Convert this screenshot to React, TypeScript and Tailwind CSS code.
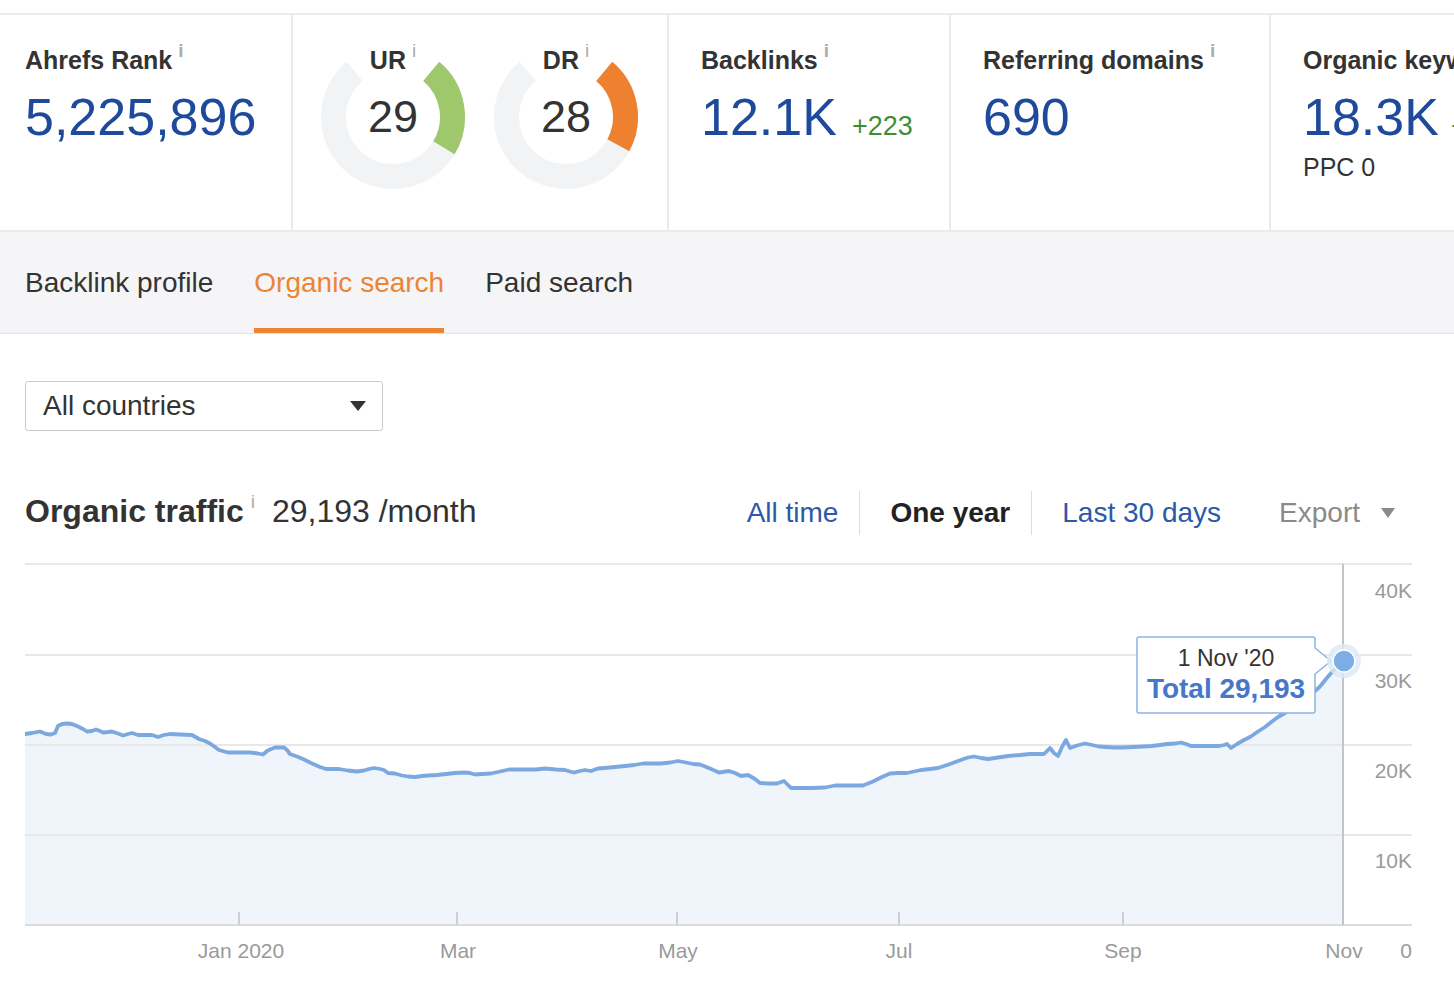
import React from 'react';

const pts: [number, number][] = [
  [25, 734], [32, 733], [40, 731.5], [46, 734], [51, 734.5], [55, 733], [58, 726], [62, 724], [67, 723.5], [72, 724],
  [78, 726.5], [83, 729], [87, 731.5], [92, 731], [96, 729.5], [100, 731], [103, 732.5], [108, 732], [112, 731.5],
  [118, 733.5], [123, 735.5], [128, 734], [132, 733], [138, 735], [145, 735], [152, 735], [158, 737], [164, 735],
  [170, 734], [180, 734.5], [192, 735], [199, 739], [205, 741], [210, 743.5], [215, 747], [219, 750], [228, 752.5],
  [240, 752.5], [250, 752.5], [258, 753.5], [263, 754.5], [267, 751], [270, 749.5], [275, 747.5], [279, 747.5],
  [284, 747.5], [287, 750], [290, 754], [297, 756.5], [304, 759.5], [312, 763.5], [320, 767], [326, 769], [333, 769],
  [339, 769], [348, 770.5], [357, 771.5], [364, 770.5], [369, 769], [374, 768], [380, 769], [384, 770], [388, 773],
  [395, 773.5], [402, 775.5], [408, 776.5], [415, 777], [422, 776], [428, 775.5], [437, 775], [446, 774], [455, 773],
  [464, 772.5], [470, 773], [475, 774.5], [482, 774], [491, 773.5], [500, 771.5], [509, 769.5], [520, 769.5],
  [536, 769.5], [545, 768.5], [556, 769.5], [565, 770], [570, 771.5], [574, 772.5], [580, 771], [585, 770], [591, 771],
  [598, 768.5], [610, 767.5], [625, 766], [634, 765], [643, 763.5], [652, 763.5], [661, 763.5], [670, 762.5],
  [678, 761], [686, 762.5], [693, 764], [700, 764.5], [710, 768.5], [719, 772.5], [729, 771], [735, 773], [741, 776],
  [748, 775], [755, 779], [760, 783], [768, 783.5], [777, 783.5], [784, 781], [788, 785], [791, 788], [800, 788],
  [812, 788], [825, 787.5], [835, 785.5], [850, 785.5], [863, 785.5], [873, 781.5], [882, 777], [890, 773.5],
  [898, 773], [907, 773], [914, 771.5], [921, 770], [930, 769], [938, 768], [950, 764], [962, 759.5], [968, 757.5],
  [974, 756.5], [981, 758], [988, 759], [998, 757.5], [1008, 756], [1020, 755], [1030, 754], [1037, 754], [1044, 754],
  [1047, 751], [1050, 748], [1054, 753], [1058, 756], [1062, 747], [1066, 740], [1070, 748], [1077, 745.5],
  [1085, 743.5], [1092, 745], [1099, 746.5], [1106, 747], [1114, 747.5], [1123, 747.5], [1133, 747], [1143, 746.5],
  [1152, 746], [1160, 745], [1167, 744], [1175, 743.5], [1181, 742.5], [1186, 744], [1191, 746], [1200, 746],
  [1210, 746], [1219, 746], [1224, 745], [1227, 744], [1231, 748], [1237, 744], [1244, 740], [1250, 737],
  [1258, 731.5], [1265, 727], [1272, 721.5], [1278, 717], [1285, 713], [1292, 708], [1301, 702], [1308, 697],
  [1314, 692], [1320, 686.5], [1326, 679], [1332, 672], [1338, 666], [1343, 661],
];

const linePath = 'M' + pts.map((p) => p.join(',')).join(' L');
const areaPath = linePath + ' L1343,925 L25,925 Z';

function polar(cx: number, cy: number, r: number, a: number) {
  const rad = (a * Math.PI) / 180;
  return [cx + r * Math.sin(rad), cy - r * Math.cos(rad)];
}

function arc(cx: number, cy: number, r: number, a1: number, a2: number) {
  const [x1, y1] = polar(cx, cy, r, a1);
  const [x2, y2] = polar(cx, cy, r, a2);
  const large = a2 - a1 > 180 ? 1 : 0;
  return `M${x1},${y1} A${r},${r} 0 ${large} 1 ${x2},${y2}`;
}

function Info() {
  return <span className="relative -top-[4px] ml-[6px] text-[19px] leading-[19px] text-[#ababab]">i</span>;
}

function Gauge({ label, value, color }: { label: string; value: number; color: string }) {
  const end = 40 + (280 * value) / 100;
  return (
    <div className="relative w-[150px] h-[150px]">
      <svg width="150" height="150" viewBox="0 0 150 150" className="absolute left-0 top-0">
        <path d={arc(75, 75, 59.5, 40, 320)} fill="none" stroke="#f1f3f5" strokeWidth="25" />
        <path d={arc(75, 75, 59.5, 40, end)} fill="none" stroke={color} strokeWidth="25" />
      </svg>
      <div className="absolute left-0 right-0 top-[3px] flex justify-center items-start">
        <span className="text-[25px] leading-[30px] font-bold text-[#333]">{label}</span>
        <Info />
      </div>
      <div className="absolute inset-0 flex items-center justify-center text-[45px] text-[#333]">{value}</div>
    </div>
  );
}

export default function App() {
  return (
    <div className="w-[1454px] h-[998px] overflow-hidden bg-white font-['Liberation_Sans',Arial,sans-serif] text-[#333]">
      <div className="h-[13px]" />
      {/* stats */}
      <div className="flex h-[219px] border-y-2 border-[#ebebeb]">
        <div className="w-[293px] shrink-0 border-r-2 border-[#ebebeb] pl-[25px] pt-[30px]">
          <div className="flex items-start text-[25px] leading-[30px] font-bold">
            Ahrefs Rank
            <Info />
          </div>
          <div className="mt-[12px] text-[52px] leading-[60px] text-[#1f4a9b]">5,225,896</div>
        </div>
        <div className="w-[376px] shrink-0 border-r-2 border-[#ebebeb] pl-[25px] pt-[27px] flex gap-[23px] items-start">
          <Gauge label="UR" value={29} color="#9fc86c" />
          <Gauge label="DR" value={28} color="#ee8130" />
        </div>
        <div className="w-[282px] shrink-0 border-r-2 border-[#ebebeb] pl-[32px] pt-[30px]">
          <div className="flex items-start text-[25px] leading-[30px] font-bold">
            Backlinks
            <Info />
          </div>
          <div className="mt-[12px] h-[60px] text-[52px] leading-[60px] text-[#1f4a9b] whitespace-nowrap">
            12.1K<span className="ml-[15px] text-[27px] leading-none text-[#3f8f32]">+223</span>
          </div>
        </div>
        <div className="w-[320px] shrink-0 border-r-2 border-[#ebebeb] pl-[32px] pt-[30px]">
          <div className="flex items-start text-[25px] leading-[30px] font-bold">
            Referring domains
            <Info />
          </div>
          <div className="mt-[12px] text-[52px] leading-[60px] text-[#1f4a9b]">690</div>
        </div>
        <div className="flex-1 min-w-0 overflow-hidden pl-[32px] pt-[30px] whitespace-nowrap">
          <div className="flex items-start text-[25px] leading-[30px] font-bold">
            Organic keywords
            <Info />
          </div>
          <div className="mt-[12px] h-[60px] text-[52px] leading-[60px] text-[#1f4a9b]">
            18.3K<span className="ml-[12px] text-[27px] leading-none text-[#3f8f32]">+1.1K</span>
          </div>
          <div className="mt-[5px] text-[25px] leading-[30px]">PPC 0</div>
        </div>
      </div>
      {/* tabs */}
      <div className="flex h-[102px] gap-[41px] border-b border-[#e2e2e2] bg-[#f5f5f7] pl-[25px] text-[28px]">
        <div className="flex items-center border-y-[5px] border-transparent">Backlink profile</div>
        <div className="flex items-center border-y-[5px] border-t-transparent border-b-[#ec8433] text-[#ec8433]">Organic search</div>
        <div className="flex items-center border-y-[5px] border-transparent">Paid search</div>
      </div>
      {/* country select */}
      <div className="pl-[25px] pt-[47px]">
        <div className="flex h-[50px] w-[358px] items-center justify-between rounded-[3px] border border-[#cccccc] pl-[17px] pr-[16px] text-[28px]">
          <span>All countries</span>
          <svg width="16" height="10" viewBox="0 0 16 10">
            <polygon points="0,0 16,0 8,10" fill="#333" />
          </svg>
        </div>
      </div>
      {/* header */}
      <div className="mt-[60px] flex h-[40px] items-center justify-between pl-[25px] pr-[59px]">
        <div className="flex items-start text-[32px] leading-[40px]">
          <span className="font-bold">Organic traffic</span>
          <span className="relative top-[1px] ml-[7px] text-[19px] leading-[19px] text-[#ababab]">i</span>
          <span className="ml-[17px]">29,193 /month</span>
        </div>
        <div className="flex items-center text-[28px] leading-[40px] pt-[4px]">
          <span className="text-[#2c59a9]">All time</span>
          <span className="mx-[21px] h-[44px] w-px bg-[#dddddd]" />
          <span className="ml-[9px] font-bold text-[#222]">One year</span>
          <span className="mx-[21px] h-[44px] w-px bg-[#dddddd]" />
          <span className="ml-[9px] text-[#2c59a9]">Last 30 days</span>
          <span className="ml-[58px] text-[#8a8a8a]">Export</span>
          <svg width="14" height="10" viewBox="0 0 14 10" className="ml-[21px]">
            <polygon points="0,0 14,0 7,10" fill="#8a8a8a" />
          </svg>
        </div>
      </div>
      {/* chart */}
      <svg
        width="1390"
        height="430"
        viewBox="25 560 1390 430"
        className="ml-[25px] mt-[29px] block"
        fontFamily="'Liberation Sans', Arial, sans-serif"
      >
        <path d={areaPath} fill="#f0f5fc" />
        {[564, 655, 745, 835].map((y) => (
          <line key={y} x1="25" x2="1412" y1={y} y2={y} stroke="#e8e8e8" strokeWidth="2" />
        ))}
        <line x1="25" x2="1412" y1="925" y2="925" stroke="#dcdcdc" strokeWidth="2" />
        {[239, 457, 677, 899, 1123, 1343].map((x) => (
          <line key={x} x1={x} x2={x} y1="912" y2="925" stroke="#d0d0d0" strokeWidth="2" />
        ))}
        <line x1="1343" x2="1343" y1="564" y2="925" stroke="#c4c4c4" strokeWidth="2" />
        <path d={linePath} fill="none" stroke="#7ba9df" strokeWidth="3.8" strokeLinejoin="round" strokeLinecap="round" />
        {[
          ['40K', 597.5],
          ['30K', 687.5],
          ['20K', 777.5],
          ['10K', 867.5],
          ['0', 957.5],
        ].map(([t, y]) => (
          <text key={t} x="1412" y={y} textAnchor="end" fontSize="21" fill="#9a9a9a">
            {t}
          </text>
        ))}
        {[
          ['Jan 2020', 241],
          ['Mar', 458],
          ['May', 678],
          ['Jul', 899],
          ['Sep', 1123],
          ['Nov', 1344],
        ].map(([t, x]) => (
          <text key={t} x={x} y="957.5" textAnchor="middle" fontSize="21" fill="#9a9a9a">
            {t}
          </text>
        ))}
        <path
          d="M1139,637 H1313 Q1315,637 1315,639 V648 L1331,661 L1315,674 V711 Q1315,713 1313,713 H1139 Q1137,713 1137,711 V639 Q1137,637 1139,637 Z"
          fill="#ffffff"
          stroke="#8cb3e3"
          strokeWidth="1.5"
        />
        <text x="1226" y="665.5" textAnchor="middle" fontSize="23" fill="#333">
          1 Nov '20
        </text>
        <text x="1226" y="698" textAnchor="middle" fontSize="28" fontWeight="bold" fill="#4677c8">
          Total 29,193
        </text>
        <circle cx="1344" cy="661" r="17" fill="#dbe8f7" opacity="0.8" />
        <circle cx="1344" cy="661" r="11" fill="#7cade5" stroke="#ffffff" strokeWidth="1.5" />
      </svg>
    </div>
  );
}
